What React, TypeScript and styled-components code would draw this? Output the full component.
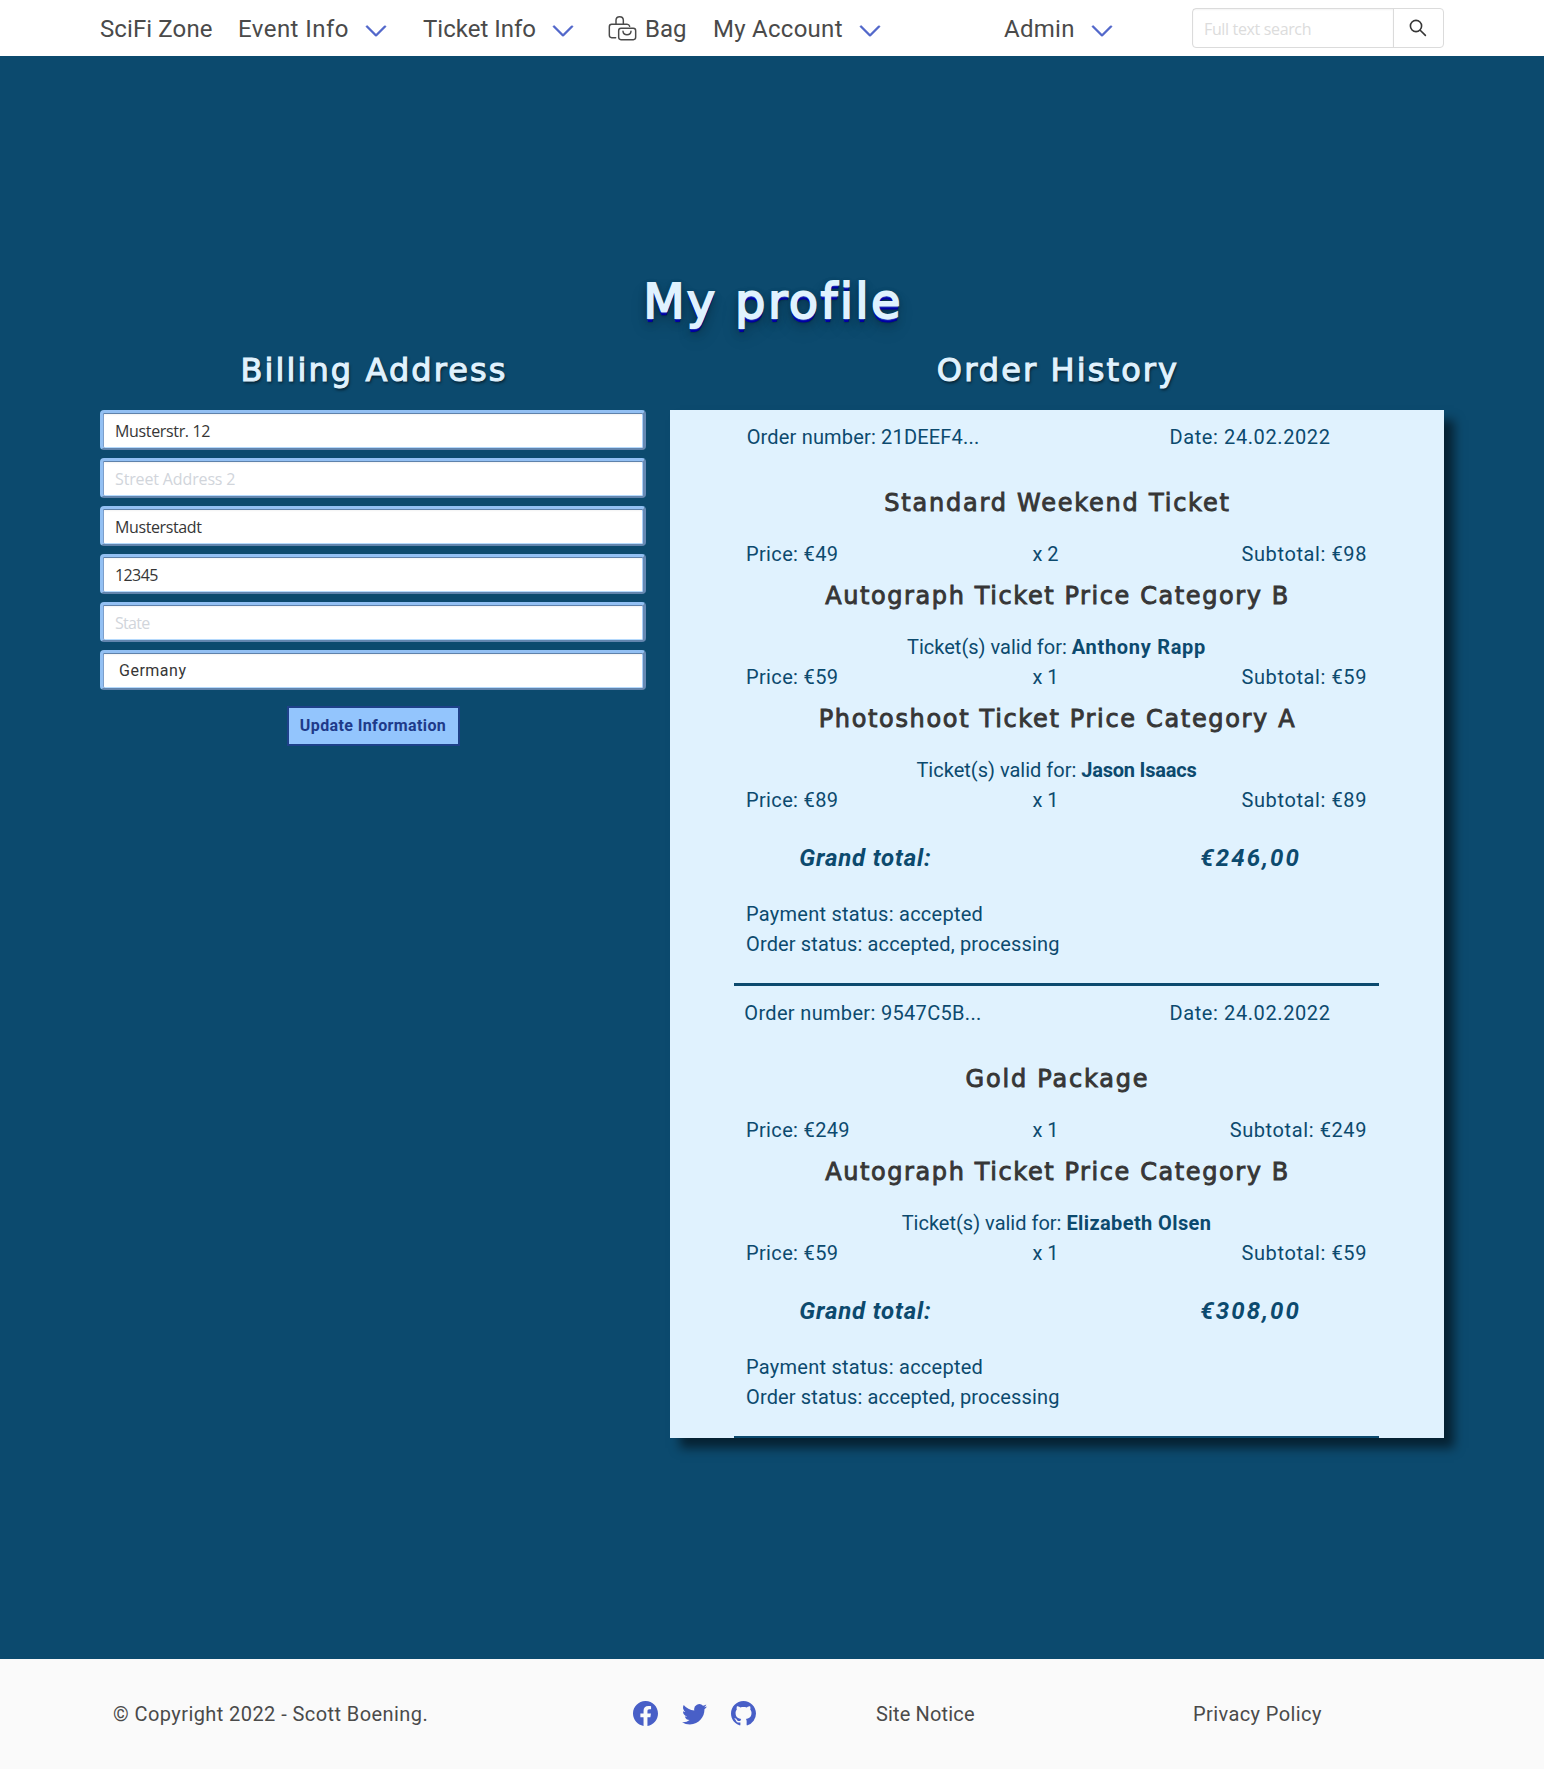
import React from "react";
import styled, { createGlobalStyle } from "styled-components";
import { BsChevronDown, BsFacebook, BsTwitter, BsGithub } from "react-icons/bs";

const GlobalStyle = createGlobalStyle`
  *, *::before, *::after { box-sizing: border-box; }
  html, body { margin: 0; padding: 0; }
  body {
    background: #0c4a6e;
    color: #4a4a4a;
    font-family: Roboto, "Liberation Sans", sans-serif;
    font-size: 20px;
    line-height: 30px;
  }
  h1, h2, h3, p { margin: 0; }
`;

const Page = styled.div`
  display: flex;
  flex-direction: column;
  height: 1769px;
  overflow: hidden;
`;

const Text = styled.span<{ $ls?: number }>`
  letter-spacing: ${(p) => p.$ls ?? 0}px;
  white-space: pre;
`;

/* Navbar */

const Navbar = styled.nav`
  display: flex;
  align-items: center;
  flex: none;
  height: 56px;
  padding: 0 100px 0 100px;
  background: #fff;
  font-size: 24px;
`;

const NavItem = styled.a<{ $width: number; $gap?: number }>`
  display: flex;
  align-items: center;
  gap: ${(p) => p.$gap ?? 15}px;
  flex: none;
  width: ${(p) => p.$width}px;
  height: 56px;
  padding-top: 2px;
`;

const Chevron = styled(BsChevronDown)`
  flex: none;
  width: 24px;
  height: 24px;
  margin-top: 3px;
  color: #485fc7;
  stroke: currentColor;
  stroke-width: 0.6;
`;

const BagSvg = styled.svg`
  flex: none;
  width: 29px;
  height: 26px;
  margin-top: -2px;
  fill: none;
  stroke: #4a4a4a;
  stroke-width: 4.4;
  stroke-linecap: round;
`;

const SearchBox = styled.form`
  display: flex;
  flex: 1;
  min-width: 0;
  height: 40px;
  margin-bottom: 0;
  border: 1px solid #dbdbdb;
  border-radius: 4px;
  background: #fff;
`;

const SearchInput = styled.input`
  flex: 1;
  min-width: 0;
  padding: 2px 11px 0;
  border: 0;
  background: transparent;
  box-shadow: inset 0 1px 2px rgba(10, 10, 10, 0.05);
  font: 16px "Open Sans", sans-serif;
  letter-spacing: -0.35px;
  &::placeholder { color: #dcdcdc; opacity: 1; }
`;

const SearchButton = styled.button`
  display: flex;
  flex: none;
  align-items: center;
  justify-content: center;
  width: 50px;
  padding: 0 1px 0 0;
  border: 0;
  border-left: 1px solid #dbdbdb;
  background: transparent;
`;

const SearchSvg = styled.svg`
  width: 18px;
  height: 18px;
  fill: none;
  stroke: #363636;
  stroke-width: 1.6;
  stroke-linecap: round;
`;

/* Main area */

const Main = styled.main`
  flex: 1;
  padding: 218px 100px 0;
  text-align: center;
`;

const Title = styled.h1`
  height: 54px;
  padding-left: 2px;
  color: #e0f2fe;
  font: 400 48px/54px "DejaVu Sans", sans-serif;
  letter-spacing: 2.3px;
  -webkit-text-stroke: 1.8px #e0f2fe;
  text-shadow: 0 1px 0 #8fa6d8, 0 2px 0 #2438b8, 0 3px 0 #0000a8, 0 4px 0 #0000a0,
    0 5px 1px rgba(0, 0, 0, 0.15), 0 0 5px rgba(0, 0, 0, 0.15),
    0 5px 8px rgba(0, 0, 0, 0.35), 0 10px 18px rgba(0, 0, 0, 0.2);
`;

const Columns = styled.div`
  display: grid;
  grid-template-columns: 546px 774px;
  gap: 24px;
  margin-top: 24px;
`;

const ColumnTitle = styled.h2`
  margin-bottom: 22px;
  padding-left: 2px;
  color: #e0f2fe;
  font: 400 32px/36px "DejaVu Sans", sans-serif;
  letter-spacing: 2.1px;
  -webkit-text-stroke: 1.1px #e0f2fe;
  text-shadow: 1px 2px 3px rgba(0, 0, 0, 0.65);
`;

const Form = styled.form`
  display: flex;
  flex-direction: column;
  align-items: center;
  gap: 8px;
`;

const Field = styled.input<{ $ls: number; $plain?: boolean }>`
  width: 100%;
  height: 40px;
  padding: ${(p) => (p.$plain ? "0 16px" : "1px 12px 0")};
  border-style: solid;
  border-width: 3px 3px 2px 3px;
  border-color: #93c0f3 #6689b4 #6285ae #93c0f3;
  border-radius: 4px;
  background: #fff;
  color: #363636;
  box-shadow: inset 0 1px 0 #5f82ab, inset 1px 0 0 #7d9fcb,
    inset 0 -1px 0 #b5d9fc, inset -1px 0 0 #a9d0fa,
    inset 0 2px 2px rgba(10, 10, 10, 0.05);
  font: 16px ${(p) => (p.$plain ? "Roboto" : '"Open Sans"')}, sans-serif;
  letter-spacing: ${(p) => p.$ls}px;
  &::placeholder { color: #d1d5db; opacity: 1; }
`;

const UpdateButton = styled.button`
  width: 173px;
  height: 40px;
  margin-top: 8px;
  padding: 0 0 2px;
  border: 2px solid #1e4189;
  background: #93c5fd;
  color: #1e3a8a;
  font: 700 16px Roboto, sans-serif;
  letter-spacing: 0.38px;
`;

const HistoryCard = styled.div`
  height: 1028px;
  padding: 12px 65px 0 64px;
  overflow: hidden;
  background: #e0f2fe;
  color: #0c4a6e;
  box-shadow: 10px 10px 10px rgba(0, 0, 0, 0.55);
`;

const OrderBlock = styled.section`
  height: 453px;
  &:first-child { height: 576px; }
`;

const SplitRow = styled.div`
  display: flex;
  justify-content: space-between;
`;

const SplitCell = styled.p`
  width: 40%;
`;

const TotalRow = styled(SplitRow)`
  margin: 25px 0 23px;
  padding-left: 3px;
  font-size: 24px;
  font-style: italic;
  font-weight: 700;
  line-height: 36px;
`;

const Items = styled.div`
  margin-top: 38px;
`;

const TicketName = styled.h3<{ $ls: number }>`
  margin-bottom: 22px;
  padding-left: 2px;
  color: #363636;
  font: 400 24px/27px "DejaVu Sans", sans-serif;
  letter-spacing: ${(p) => p.$ls}px;
  -webkit-text-stroke: 0.9px #363636;
  white-space: nowrap;
`;

const Ticket = styled.article`
  & + & { margin-top: 14px; }
`;

const PriceRow = styled.div`
  display: grid;
  grid-template-columns: 1fr 1fr 1fr;
  padding: 0 12px;
`;

const PriceCell = styled.p<{ $align: "left" | "center" | "right" }>`
  text-align: ${(p) => p.$align};
  padding-right: ${(p) => (p.$align === "center" ? 22 : 0)}px;
`;

const Status = styled.div`
  padding: 0 12px;
  text-align: left;
`;

const Rule = styled.hr`
  height: 2.5px;
  margin: 24px 0 12px;
  border: 0;
  background: #0c4a6e;
`;

/* Footer */

const Footer = styled.footer`
  display: grid;
  grid-template-columns: 520px 243px 317px 1fr;
  align-items: center;
  flex: none;
  height: 110px;
  padding: 0 100px 0 113px;
  background: #fafafa;
`;

const Socials = styled.div`
  display: flex;
  gap: 24px;
  padding-bottom: 1px;
  color: #485fc7;
  svg { width: 25px; height: 25px; }
`;

type TicketData = {
  name: string;
  ls: number;
  price: string;
  count: string;
  subtotal: string;
  guest?: string;
  guestLs?: number;
};

type OrderData = {
  id: string;
  ls: number;
  date: string;
  total: string;
  tickets: TicketData[];
};

const orders: OrderData[] = [
  {
    id: "21DEEF4...",
    ls: 0.176,
    date: "24.02.2022",
    total: "€246,00",
    tickets: [
      { name: "Standard Weekend Ticket", ls: 1.77, price: "€49", count: "x 2", subtotal: "€98" },
      { name: "Autograph Ticket Price Category B", ls: 1.59, price: "€59", count: "x 1", subtotal: "€59", guest: "Anthony Rapp", guestLs: 0.69 },
      { name: "Photoshoot Ticket Price Category A", ls: 1.665, price: "€89", count: "x 1", subtotal: "€89", guest: "Jason Isaacs", guestLs: -0.21 },
    ],
  },
  {
    id: "9547C5B...",
    ls: 0.326,
    date: "24.02.2022",
    total: "€308,00",
    tickets: [
      { name: "Gold Package", ls: 1.79, price: "€249", count: "x 1", subtotal: "€249" },
      { name: "Autograph Ticket Price Category B", ls: 1.59, price: "€59", count: "x 1", subtotal: "€59", guest: "Elizabeth Olsen", guestLs: 0.39 },
    ],
  },
];

const BagIcon = () => (
  <BagSvg viewBox="0 0 87 78">
    <path d="M23 68H11Q4 68 4 61V35Q4 28 11 28H57Q63 28 65 34" />
    <path d="M24 28V16Q24 5 35 5Q46 5 46 16V28" />
    <rect x="32" y="40" width="51" height="34" rx="7" />
    <path d="M45 49Q46 59 57 59Q68 59 69 49" />
  </BagSvg>
);

const SearchIcon = () => (
  <SearchSvg viewBox="0 0 18 18">
    <circle cx="7" cy="7" r="5.6" />
    <path d="M11.2 11.2L16.4 16.4" />
  </SearchSvg>
);

const TicketEntry = ({ ticket }: { ticket: TicketData }) => (
  <Ticket>
    <TicketName $ls={ticket.ls}>{ticket.name}</TicketName>
    {ticket.guest && (
      <p>
        <Text>{"Ticket(s) valid for: "}</Text>
        <Text as="strong" $ls={ticket.guestLs}>{ticket.guest}</Text>
      </p>
    )}
    <PriceRow>
      <PriceCell $align="left"><Text $ls={0.35}>{`Price: ${ticket.price}`}</Text></PriceCell>
      <PriceCell $align="center"><Text>{ticket.count}</Text></PriceCell>
      <PriceCell $align="right"><Text $ls={0.6}>{`Subtotal: ${ticket.subtotal}`}</Text></PriceCell>
    </PriceRow>
  </Ticket>
);

const Order = ({ order }: { order: OrderData }) => (
  <OrderBlock>
    <SplitRow>
      <SplitCell><Text $ls={order.ls}>{`Order number: ${order.id}`}</Text></SplitCell>
      <SplitCell><Text $ls={0.6}>{`Date: ${order.date}`}</Text></SplitCell>
    </SplitRow>
    <Items>
      {order.tickets.map((t) => <TicketEntry key={t.name} ticket={t} />)}
    </Items>
    <TotalRow>
      <SplitCell><Text $ls={0.83}>Grand total:</Text></SplitCell>
      <SplitCell><Text $ls={2.1}>{order.total}</Text></SplitCell>
    </TotalRow>
    <Status>
      <p><Text $ls={0.26}>Payment status: accepted</Text></p>
      <p><Text $ls={0.15}>Order status: accepted, processing</Text></p>
    </Status>
    <Rule />
  </OrderBlock>
);

export default function App() {
  return (
    <Page>
      <GlobalStyle />
      <Navbar>
        <NavItem $width={138}><Text $ls={0.11}>SciFi Zone</Text></NavItem>
        <NavItem $width={185}><Text $ls={0.45}>Event Info</Text><Chevron /></NavItem>
        <NavItem $width={185}><Text>Ticket Info</Text><Chevron /></NavItem>
        <NavItem $width={105} $gap={8}><BagIcon /><Text>Bag</Text></NavItem>
        <NavItem $width={291}><Text $ls={0.27}>My Account</Text><Chevron /></NavItem>
        <NavItem $width={188}><Text $ls={0.29}>Admin</Text><Chevron /></NavItem>
        <SearchBox>
          <SearchInput placeholder="Full text search" />
          <SearchButton type="button" aria-label="Search"><SearchIcon /></SearchButton>
        </SearchBox>
      </Navbar>

      <Main>
        <Title>My profile</Title>
        <Columns>
          <div>
            <ColumnTitle>Billing Address</ColumnTitle>
            <Form>
              <Field $ls={-0.34} defaultValue="Musterstr. 12" />
              <Field $ls={-0.14} placeholder="Street Address 2" />
              <Field $ls={-0.38} defaultValue="Musterstadt" />
              <Field $ls={-0.6} defaultValue="12345" />
              <Field $ls={-0.7} placeholder="State" />
              <Field $ls={0.5} $plain defaultValue="Germany" />
              <UpdateButton type="button">Update Information</UpdateButton>
            </Form>
          </div>
          <div>
            <ColumnTitle>Order History</ColumnTitle>
            <HistoryCard>
              {orders.map((o) => <Order key={o.id} order={o} />)}
            </HistoryCard>
          </div>
        </Columns>
      </Main>

      <Footer>
        <Text $ls={0.42}>© Copyright 2022 - Scott Boening.</Text>
        <Socials><BsFacebook /><BsTwitter /><BsGithub /></Socials>
        <Text $ls={0.15}>Site Notice</Text>
        <Text $ls={0.41}>Privacy Policy</Text>
      </Footer>
    </Page>
  );
}
